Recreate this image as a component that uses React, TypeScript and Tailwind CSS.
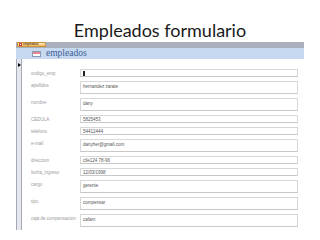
import React from "react";

type Row = { label: string; value: string; tall: boolean; cursor?: boolean };

const rows: Row[] = [
  { label: "codigo_emp", value: "", tall: false, cursor: true },
  { label: "apellidos", value: "hernandez zarate", tall: true },
  { label: "nombre", value: "dany", tall: true },
  { label: "CEDULA", value: "5825453", tall: false },
  { label: "telefono", value: "54412444", tall: false },
  { label: "e-mail", value: "danyher@gmail.com", tall: true },
  { label: "direccion", value: "clle124 78-96", tall: false },
  { label: "fecha_ingreso", value: "12/03/1998", tall: false },
  { label: "cargo", value: "gerente", tall: true },
  { label: "tipo", value: "compensar", tall: true },
  { label: "caja de compensacion", value: "cafam", tall: true },
];

export default function App() {
  return (
    <div className="w-[320px] h-[240px] bg-white overflow-hidden">
      <div
        className="h-[42px] flex items-end justify-center text-[18px] leading-[22px] text-[#1a1a1a] pb-[1px]"
        style={{ fontFamily: "Lato, 'Open Sans', sans-serif" }}
      >
        Empleados formulario
      </div>
      <div className="ml-[16px] w-[288px]">
        <div className="h-[6px] bg-[#a9b0bb] flex items-start">
          <div className="ml-[1px] h-[5px] w-[29px] bg-gradient-to-b from-[#fff1c9] to-[#f3b64a] border border-[#c8923a] rounded-tr-[2px] flex items-center gap-[1px] pl-[1px]">
            <div className="w-[3px] h-[3px] bg-white border-[0.5px] border-[#c04040]" />
            <span className="text-[3px] leading-[3px] text-[#5a3a10] font-bold" style={{ fontFamily: "'Liberation Sans', sans-serif" }}>empleados</span>
          </div>
        </div>
        <div className="h-[11px] bg-[#c6d9f1] flex items-center pl-[16px] gap-[5px]">
          <div className="w-[9px] h-[6px] border border-[#8a9bb5] bg-white flex flex-col">
            <div className="h-[2px] bg-[#e8878f]" />
          </div>
          <span
            className="text-[9.5px] leading-[11px] text-[#3d5f94]"
            style={{ fontFamily: "'Liberation Serif', 'DejaVu Serif', serif" }}
          >
            empleados
          </span>
        </div>
        <div className="flex">
          <div className="w-[6px] h-[171px] bg-[#e4e7ed] border-l border-r border-[#a3aab6] relative">
            <div className="absolute left-[1px] top-[4px] w-0 h-0 border-t-[2px] border-b-[2px] border-l-[3px] border-t-transparent border-b-transparent border-l-black" />
          </div>
          <div className="flex flex-col gap-[4px] pt-[10px]" style={{ fontFamily: "'Liberation Sans', Arial, sans-serif" }}>
            {rows.map((r) => (
              <div key={r.label} className="flex">
                <div className="w-[58px] pl-[9px] pt-[2px] text-[4.5px] leading-[5px] text-[#9a9a9a] whitespace-nowrap">
                  {r.label}
                </div>
                <div
                  className={
                    r.tall
                      ? "w-[218px] h-[13px] border border-[#d8d8d8] border-b-[#c8c8c8] bg-white pl-[2px] pt-[2px] text-[4.5px] leading-[5px] text-[#555555]"
                      : "w-[218px] h-[8px] border border-[#d8d8d8] border-b-[#c8c8c8] bg-white pl-[2px] pt-[1px] text-[4.5px] leading-[5px] text-[#555555]"
                  }
                >
                  {r.cursor ? <div className="w-[2px] h-[5px] bg-[#222]" /> : r.value}
                </div>
              </div>
            ))}
          </div>
        </div>
      </div>
    </div>
  );
}
